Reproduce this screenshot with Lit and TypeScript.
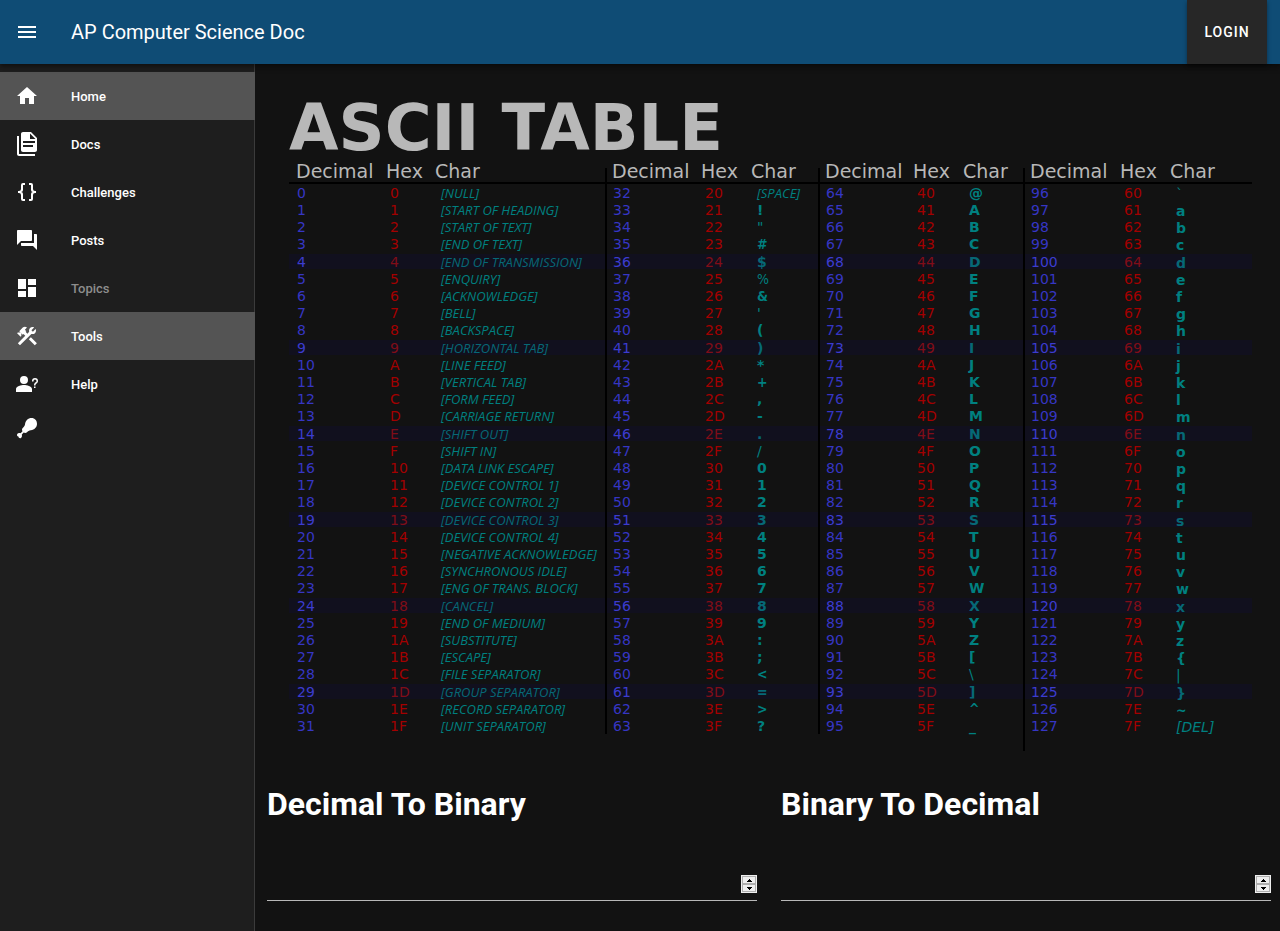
import { LitElement, html, css, svg } from "lit";
import { customElement, state } from "lit/decorators.js";
import { classMap } from "lit/directives/class-map.js";

interface NavItem {
  label: string;
  icon: unknown;
  active?: boolean;
  disabled?: boolean;
}

const NAV: NavItem[] = [
  { label: "Home", active: true, icon: svg`<path d="M10 20V14H14V20H19V12H22L12 3L2 12H5V20H10Z"/>` },
  {
    label: "Docs",
    icon: svg`<path d="M16 0H8C6.9 0 6 .9 6 2V18C6 19.1 6.9 20 8 20H20C21.1 20 22 19.1 22 18V6L16 0M18 15H8V13H18V15M20 11H8V9H20V11M15 7V1.5L20.5 7H15M4 4V22H20V24H4C2.9 24 2 23.1 2 22V4H4Z"/>`,
  },
  {
    label: "Challenges",
    icon: svg`<path d="M8 3A2 2 0 0 0 6 5V9A2 2 0 0 1 4 11H3V13H4A2 2 0 0 1 6 15V19A2 2 0 0 0 8 21H10V19H8V14A2 2 0 0 0 6 12A2 2 0 0 0 8 10V5H10V3M16 3A2 2 0 0 1 18 5V9A2 2 0 0 0 20 11H21V13H20A2 2 0 0 0 18 15V19A2 2 0 0 1 16 21H14V19H16V14A2 2 0 0 1 18 12A2 2 0 0 1 16 10V5H14V3H16Z"/>`,
  },
  {
    label: "Posts",
    icon: svg`<path d="M21 6H19V15H6V17C6 17.55 6.45 18 7 18H18L22 22V7C22 6.45 21.55 6 21 6M17 12V3C17 2.45 16.55 2 16 2H3C2.45 2 2 2.45 2 3V17L6 13H16C16.55 13 17 12.55 17 12Z"/>`,
  },
  { label: "Topics", disabled: true, icon: svg`<path d="M13 3V9H21V3M13 21H21V11H13M3 21H11V15H3M3 13H11V3H3V13Z"/>` },
  {
    label: "Tools",
    active: true,
    icon: svg`<path d="M13.78 15.3L19.78 21.3L21.89 19.14L15.89 13.14L13.78 15.3M17.5 10.1C17.11 10.1 16.69 10.05 16.36 9.91L4.97 21.25L2.86 19.14L10.27 11.74L8.5 9.96L7.78 10.66L6.33 9.25V12.11L5.63 12.81L2.11 9.25L2.81 8.55H5.62L4.22 7.14L7.78 3.58C8.95 2.41 10.83 2.41 12 3.58L9.89 5.74L11.3 7.14L10.59 7.85L12.38 9.63L14.2 7.75C14.06 7.42 14 7 14 6.63C14 4.66 15.56 3.11 17.5 3.11C18.09 3.11 18.61 3.25 19.08 3.53L16.41 6.2L17.91 7.7L20.58 5.03C20.86 5.5 21 6 21 6.63C21 8.55 19.45 10.1 17.5 10.1Z"/>`,
  },
  {
    label: "Help",
    icon: svg`<path d="M20.5 14.5V16H19V14.5H20.5M18.5 9.5H17V9A3 3 0 0 1 20 6A3 3 0 0 1 23 9C23 9.97 22.5 10.88 21.71 11.41L21.41 11.6C20.84 12 20.5 12.61 20.5 13.3V13.5H19V13.3C19 12.11 19.6 11 20.59 10.35L20.88 10.16C21.27 9.9 21.5 9.47 21.5 9A1.5 1.5 0 0 0 20 7.5A1.5 1.5 0 0 0 18.5 9V9.5M9 13C11.67 13 17 14.34 17 17V20H1V17C1 14.34 6.33 13 9 13M9 4A4 4 0 0 1 13 8A4 4 0 0 1 9 12A4 4 0 0 1 5 8A4 4 0 0 1 9 4Z"/>`,
  },
];

const CONTROL_NAMES = [
  "NULL", "START OF HEADING", "START OF TEXT", "END OF TEXT", "END OF TRANSMISSION", "ENQUIRY",
  "ACKNOWLEDGE", "BELL", "BACKSPACE", "HORIZONTAL TAB", "LINE FEED", "VERTICAL TAB", "FORM FEED",
  "CARRIAGE RETURN", "SHIFT OUT", "SHIFT IN", "DATA LINK ESCAPE", "DEVICE CONTROL 1",
  "DEVICE CONTROL 2", "DEVICE CONTROL 3", "DEVICE CONTROL 4", "NEGATIVE ACKNOWLEDGE",
  "SYNCHRONOUS IDLE", "ENG OF TRANS. BLOCK", "CANCEL", "END OF MEDIUM", "SUBSTITUTE", "ESCAPE",
  "FILE SEPARATOR", "GROUP SEPARATOR", "RECORD SEPARATOR", "UNIT SEPARATOR", "SPACE",
];

const charLabel = (code: number) => {
  if (code < CONTROL_NAMES.length) return `[${CONTROL_NAMES[code]}]`;
  return code === 127 ? "[DEL]" : String.fromCharCode(code);
};

const ROWS = Array.from({ length: 32 }, (_, i) => i);
const GROUPS = [0, 32, 64, 96];

@customElement("ascii-table")
export class AsciiTable extends LitElement {
  static styles = css`
    :host {
      display: block;
      padding: 32px 28px 0 34px;
      font-family: "DejaVu Sans", sans-serif;
      color: #b8b8b8;
    }
    .title {
      margin: 0;
      font-size: 64px;
      line-height: 64px;
      font-weight: 700;
      white-space: nowrap;
    }
    .table {
      width: 100%;
      table-layout: fixed;
      border-collapse: separate;
      border-spacing: 0;
      font-size: 14px;
      line-height: 16px;
    }
    .dec-1 { width: 97px; }
    .hex-1 { width: 49px; }
    .char-1 { width: 170px; }
    .dec-2 { width: 96px; }
    .hex-2 { width: 50px; }
    .char-2 { width: 67px; }
    .dec-3 { width: 95px; }
    .hex-3 { width: 50px; }
    .char-3 { width: 60px; }
    .dec-4 { width: 97px; }
    .hex-4 { width: 50px; }
    th,
    td {
      padding: 0;
      text-align: left;
      white-space: nowrap;
      vertical-align: middle;
    }
    th {
      height: 22px;
      font-size: 19px;
      line-height: 22px;
      font-weight: 400;
      border-bottom: 2px solid #000;
    }
    td { padding-top: 1px; }
    th.dec { padding-left: 7px; }
    th.rule {
      padding-left: 7px;
      background: linear-gradient(#000, #000) 0 100% / 2px 14px no-repeat;
    }
    td.dec { padding-left: 8px; color: #3636c4; }
    td.rule { padding-left: 6px; border-left: 2px solid #000; }
    td.hex { padding-left: 4px; color: #a30000; }
    td.char { padding-left: 6px; color: #008080; font-weight: 700; }
    td.low { padding-top: 3px; line-height: 14px; }
    td.light { font-weight: 400; }
    td.narrow { font-family: "DejaVu Sans Condensed", "DejaVu Sans", sans-serif; }
    td.named { font-weight: 400; font-style: italic; }
    td.long { font-family: "Open Sans", sans-serif; font-size: 13px; }
    .band td {
      height: 17px;
      background: linear-gradient(#11101e, #11101e) 0 2px / 100% 15px no-repeat border-box;
    }
    .band td.low { height: 15px; }
    .band td.dec { color: #3c3cd0; }
    .band td.hex { color: #800d18; }
    .band td.char { color: #066876; }
    .tail td { height: 16px; }
  `;

  private cells(code: number, group: number) {
    const label = charLabel(code);
    const named = label.length > 1;
    return html`<td class=${classMap({ dec: true, rule: group > 0 })}>${code}</td>
      <td class="hex">${code.toString(16).toUpperCase()}</td>
      <td
        class=${classMap({
          char: true,
          named,
          long: named && code < 127,
          low: code >= 96,
          light: !named && "\"%'/\\`|".includes(label),
          narrow: !named && "#%&+<=>^~".includes(label),
        })}
      >${label}</td>`;
  }

  render() {
    return html`
      <h1 class="title">ASCII TABLE</h1>
      <table class="table" aria-label="ASCII table">
        <colgroup>
          ${GROUPS.map((_, g) => html`<col class="dec-${g + 1}" /><col class="hex-${g + 1}" /><col class="char-${g + 1}" />`)}
        </colgroup>
        <thead>
          <tr>
            ${GROUPS.map(
              (_, g) => html`<th scope="col" class=${classMap({ dec: true, rule: g > 0 })}>Decimal</th>
                <th scope="col">Hex</th>
                <th scope="col">Char</th>`
            )}
          </tr>
        </thead>
        <tbody>
          ${ROWS.map((r) => html`<tr class=${classMap({ band: r % 5 === 4 })}>${GROUPS.map((base, g) => this.cells(base + r, g))}</tr>`)}
        </tbody>
        <tfoot>
          <tr class="tail"><td colspan="9"></td><td class="rule" colspan="3"></td></tr>
        </tfoot>
      </table>
    `;
  }
}

@customElement("number-converter")
export class NumberConverter extends LitElement {
  static properties = { heading: {}, value: { state: true } };
  declare heading: string;
  declare value: string;

  static styles = css`
    :host { display: block; }
    .heading {
      display: block;
      font-size: 32px;
      line-height: 48px;
      font-weight: 700;
      color: #fff;
    }
    .field {
      display: flex;
      align-items: center;
      height: 32px;
      margin-top: 40px;
      border-bottom: 1px solid #b8b8b8;
    }
    .input {
      flex: 1;
      min-width: 0;
      height: 32px;
      padding: 0;
      border: 0;
      outline: 0;
      background: transparent;
      color: #fff;
      font: 16px/20px Roboto, sans-serif;
      appearance: textfield;
    }
    .input::-webkit-inner-spin-button { appearance: none; margin: 0; }
    .spin {
      display: grid;
      grid-template-rows: 1fr 1fr;
      gap: 2px;
      box-sizing: border-box;
      width: 16px;
      height: 18px;
      padding: 1px;
      border: 1px solid #efefef;
      background: #aeaeae;
    }
    .step {
      display: grid;
      place-items: center;
      padding: 0;
      border: 0;
      background: #efefef;
    }
    .arrow { display: block; width: 5px; height: 3px; }
  `;

  constructor() {
    super();
    this.heading = "";
    this.value = "";
  }

  private step(by: number) {
    this.value = String(Number(this.value || 0) + by);
  }

  render() {
    return html`
      <label class="heading" for="number">${this.heading}</label>
      <div class="field">
        <input
          class="input"
          id="number"
          type="number"
          .value=${this.value}
          @input=${(e: Event) => (this.value = (e.target as HTMLInputElement).value)}
        />
        <div class="spin">
          <button class="step" aria-label="Increase" @click=${() => this.step(1)}>
            <svg class="arrow" viewBox="0 0 5 3" shape-rendering="crispEdges"><path d="M2 0H3V1H4V2H5V3H0V2H1V1H2Z" /></svg>
          </button>
          <button class="step" aria-label="Decrease" @click=${() => this.step(-1)}>
            <svg class="arrow" viewBox="0 0 5 3" shape-rendering="crispEdges"><path d="M0 0H5V1H4V2H3V3H2V2H1V1H0Z" /></svg>
          </button>
        </div>
      </div>
    `;
  }
}

@customElement("app-root")
export class AppRoot extends LitElement {
  @state() private open = true;

  static styles = css`
    :host {
      display: flex;
      flex-direction: column;
      min-height: 100vh;
      background: #121212;
      color: #fff;
      font-family: Roboto, sans-serif;
    }
    .bar {
      position: relative;
      z-index: 1;
      display: flex;
      align-items: center;
      height: 64px;
      padding: 0 13px 0 15px;
      background: #0f4c75;
      box-shadow: 0 2px 4px rgba(0, 0, 0, 0.3), 0 4px 6px rgba(0, 0, 0, 0.2);
    }
    .menu {
      display: flex;
      margin: 0 32px 0 0;
      padding: 0;
      border: 0;
      background: none;
    }
    .icon { display: block; width: 24px; height: 24px; fill: #fff; }
    .brand { flex: 1; font-size: 20px; line-height: 24px; }
    .login {
      align-self: stretch;
      min-width: 80px;
      padding: 0 16px;
      border: 0;
      background: #272727;
      color: #fff;
      font: 500 14px/20px Roboto, sans-serif;
      letter-spacing: 1px;
      box-shadow: 0 2px 4px rgba(0, 0, 0, 0.4);
    }
    .body { display: flex; flex: 1; }
    .drawer {
      flex: none;
      box-sizing: border-box;
      width: 255px;
      padding: 8px 0;
      border-right: 1px solid #3b3b3b;
      background: #1e1e1e;
    }
    .link {
      display: flex;
      align-items: center;
      gap: 32px;
      height: 48px;
      margin-right: -1px;
      padding: 0 15px;
      color: #fff;
      font-size: 13px;
      line-height: 16px;
      font-weight: 500;
      text-decoration: none;
    }
    .label { padding-top: 2px; }
    .link.active { background: #545454; }
    .link.disabled .label { color: #8d8d8d; }
    .extra { display: block; padding: 8px 15px; }
    .main { flex: 1; min-width: 0; }
    .converters {
      display: grid;
      grid-template-columns: 1fr 1fr;
      gap: 24px;
      padding: 29px 9px 24px 12px;
    }
  `;

  render() {
    return html`
      <header class="bar">
        <button class="menu" aria-label="Toggle navigation" @click=${() => (this.open = !this.open)}>
          <svg class="icon" viewBox="0 0 24 24"><path d="M3 6H21V8H3V6M3 11H21V13H3V11M3 16H21V18H3V16Z" /></svg>
        </button>
        <span class="brand">AP Computer Science Doc</span>
        <button class="login">LOGIN</button>
      </header>
      <div class="body">
        ${this.open
          ? html`<nav class="drawer">
              ${NAV.map(
                (item) => html`<a
                  class=${classMap({ link: true, active: !!item.active, disabled: !!item.disabled })}
                  href="#${item.label.toLowerCase()}"
                  ><svg class="icon" viewBox="0 0 24 24">${item.icon}</svg><span class="label">${item.label}</span></a
                >`
              )}
              <a class="extra" href="#more" aria-label="More">
                <svg class="icon" viewBox="0 0 24 24">
                  <path d="M16.5 2C13 2 10.5 4.5 10 8.500C9.800 10 8.600 11 7.300 12.600C6.800 13.500 7 14.500 7.500 15.300L5.600 17.200C4.600 16.900 3 17 2.300 18C1.600 19.200 2.200 20.300 3.400 20.600C3.600 21.900 4.800 22.500 6 21.900C7 21.200 7.200 19.600 6.800 18.400L8.700 16.500C9.600 17.200 11 17.200 12 16.300C13 15.200 14 14.500 15.800 14.300C19.500 13.900 22 11 22 8C22 4.500 19.800 2 16.500 2Z" />
                </svg>
              </a>
            </nav>`
          : null}
        <main class="main">
          <ascii-table></ascii-table>
          <section class="converters">
            <number-converter heading="Decimal To Binary"></number-converter>
            <number-converter heading="Binary To Decimal"></number-converter>
          </section>
        </main>
      </div>
    `;
  }
}
